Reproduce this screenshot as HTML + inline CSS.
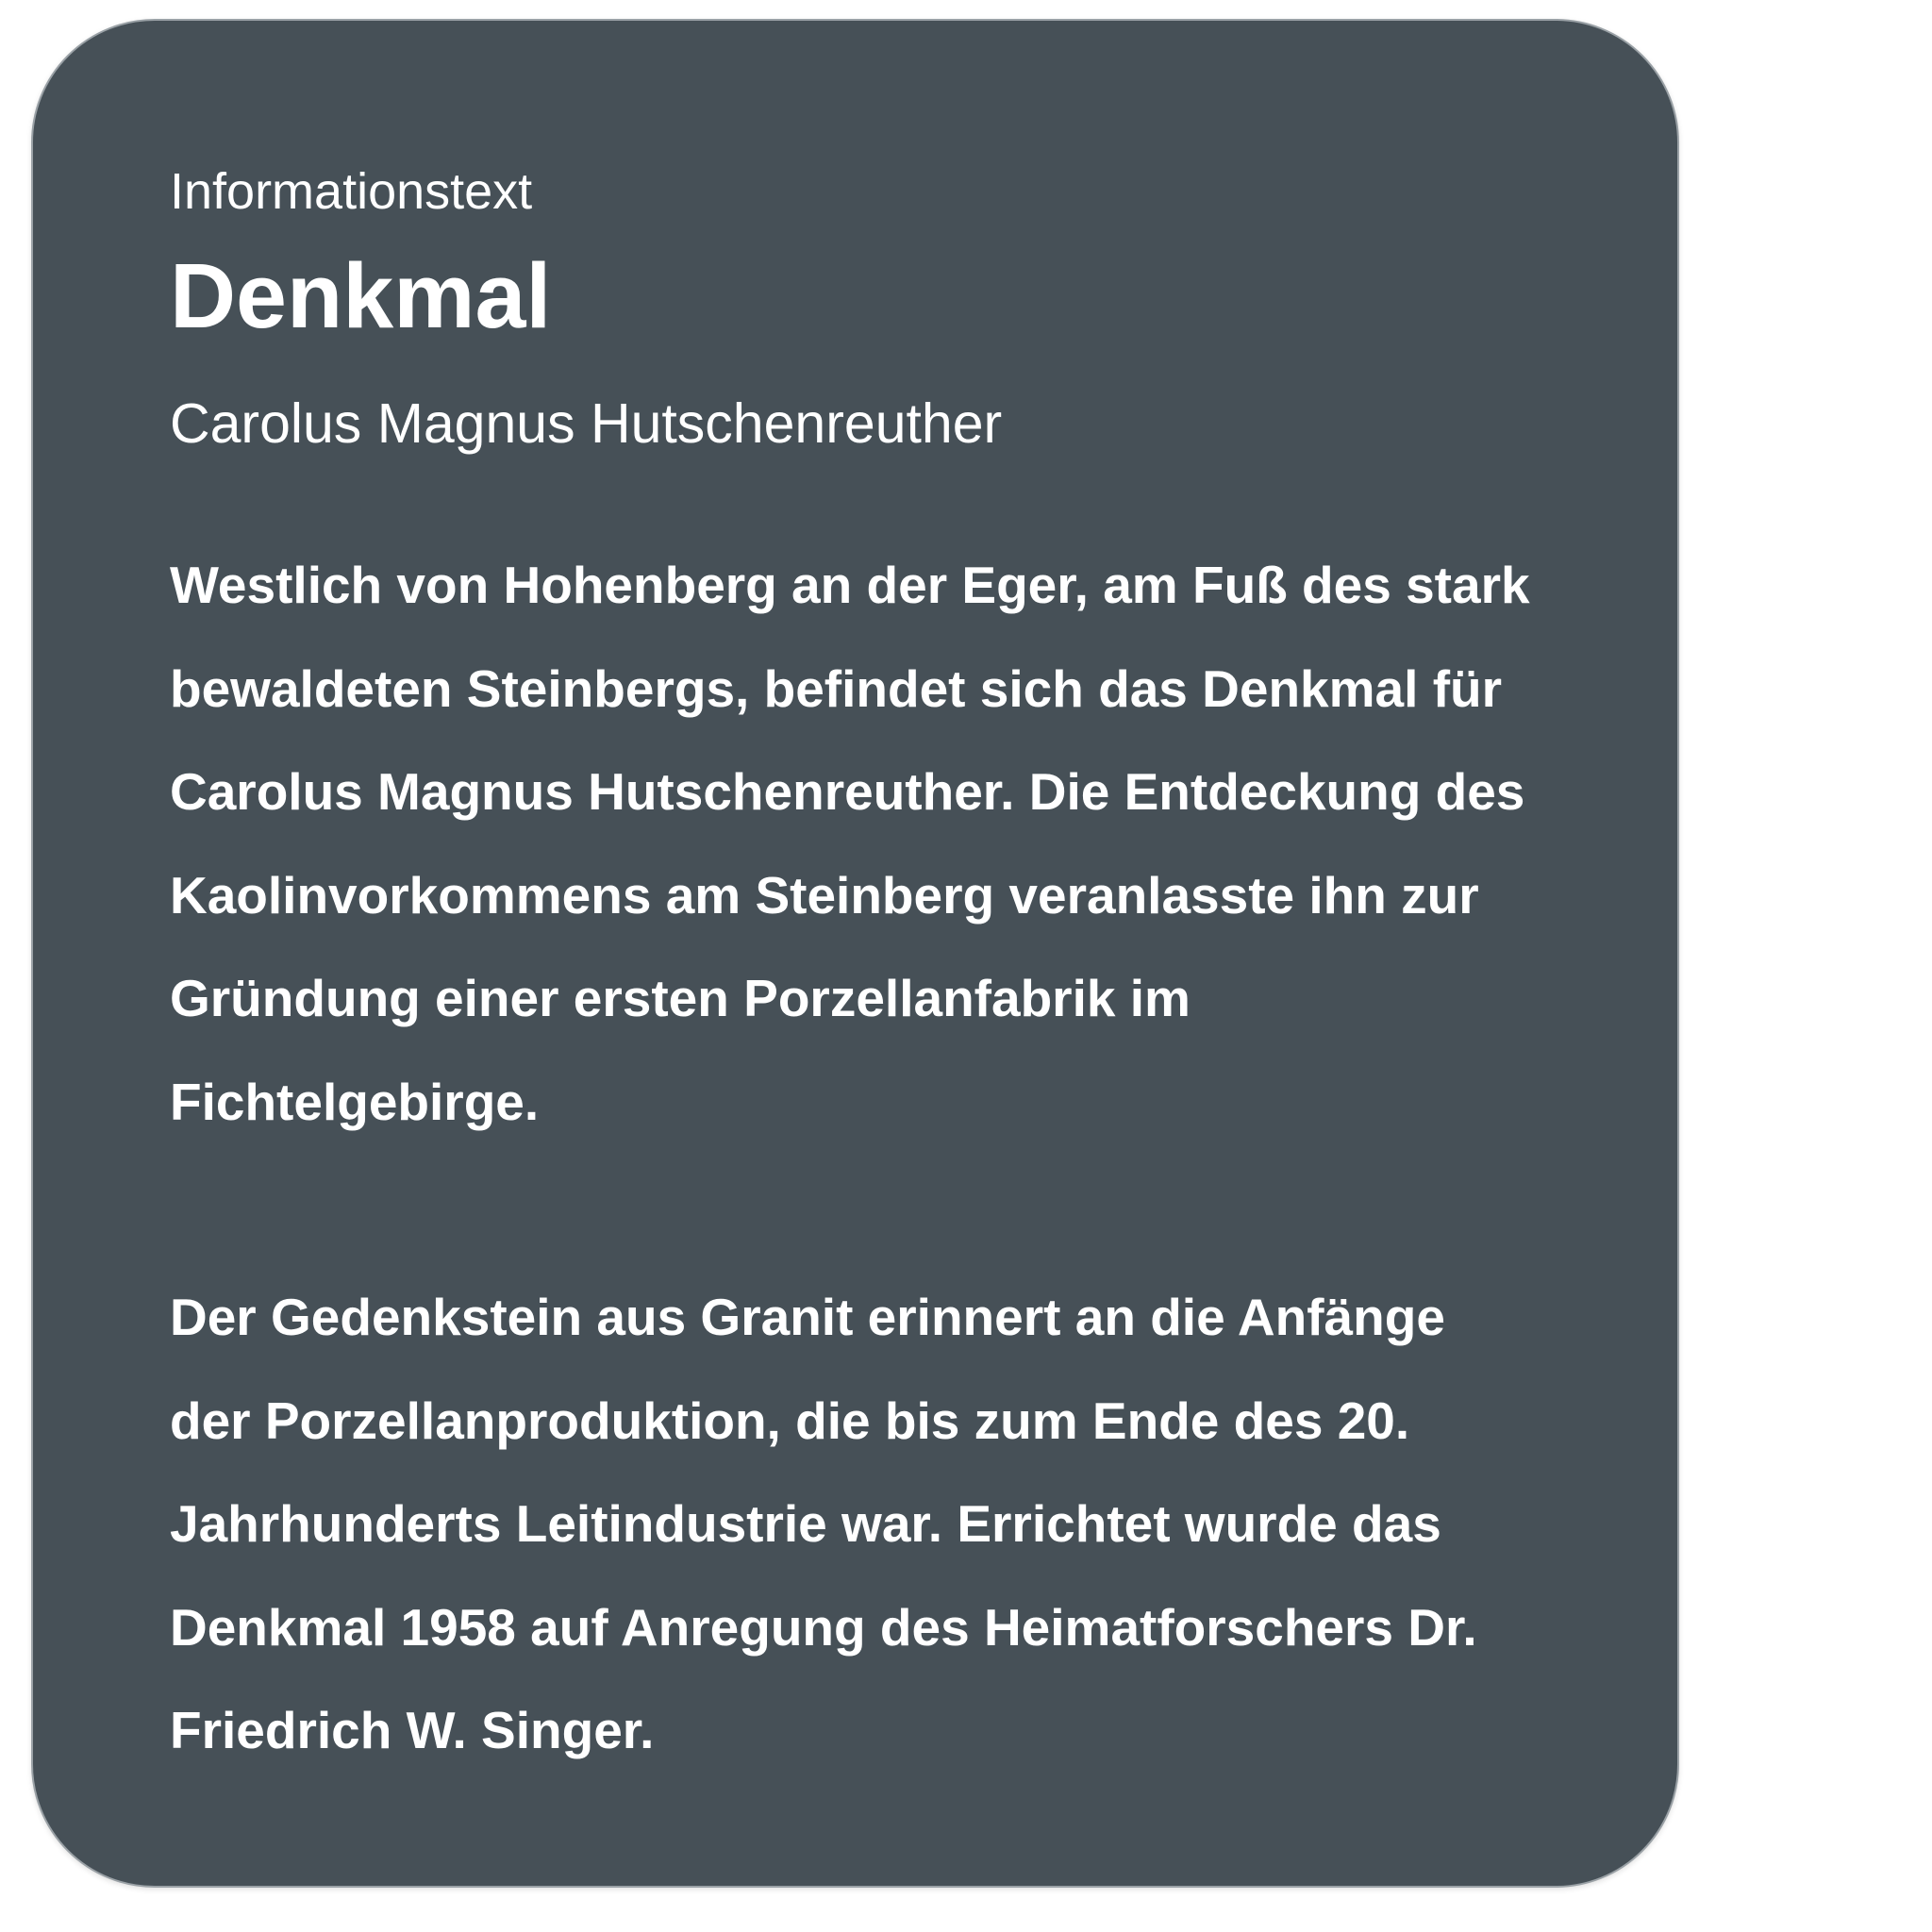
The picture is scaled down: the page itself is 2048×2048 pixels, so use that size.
<!DOCTYPE html>
<html><head><meta charset="utf-8"><style>
html,body{margin:0;padding:0;background:#fff;width:2048px;height:2048px;overflow:hidden}
body{font-family:"Liberation Sans",sans-serif;color:#fff;position:relative}
.card{position:absolute;left:33px;top:20px;width:1743px;height:1977px;background:#465057;border:2px solid #9aa1a6;border-radius:131px;box-shadow:0 2px 6px rgba(0,0,0,.12)}
.t{position:absolute;left:180px;white-space:nowrap;line-height:1}
.b{position:absolute;left:180px;white-space:nowrap;font-weight:bold;font-size:55px;line-height:109.5px}
</style></head><body>
<div class="card"></div>
<div class="t" style="top:176px;font-size:54px">Informationstext</div>
<div class="t" style="top:265px;font-size:97px;font-weight:bold">Denkmal</div>
<div class="t" style="top:420px;font-size:59px">Carolus Magnus Hutschenreuther</div>
<div class="b" style="top:566px">Westlich von Hohenberg an der Eger, am Fuß des stark<br>bewaldeten Steinbergs, befindet sich das Denkmal für<br>Carolus Magnus Hutschenreuther. Die Entdeckung des<br>Kaolinvorkommens am Steinberg veranlasste ihn zur<br>Gründung einer ersten Porzellanfabrik im<br>Fichtelgebirge.</div>
<div class="b" style="top:1342px">Der Gedenkstein aus Granit erinnert an die Anfänge<br>der Porzellanproduktion, die bis zum Ende des 20.<br>Jahrhunderts Leitindustrie war. Errichtet wurde das<br>Denkmal 1958 auf Anregung des Heimatforschers Dr.<br>Friedrich W. Singer.</div>
</body></html>
